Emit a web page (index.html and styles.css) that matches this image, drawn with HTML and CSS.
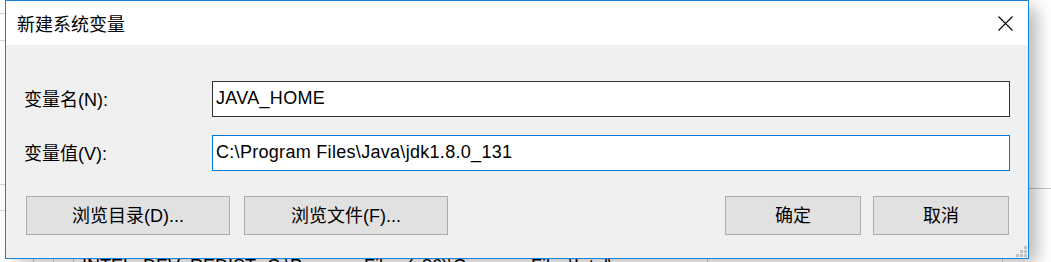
FILE: index.html
```html
<!DOCTYPE html>
<html lang="zh-CN">
<head>
<meta charset="utf-8">
<title>新建系统变量</title>
<link rel="stylesheet" href="styles.css">
</head>
<body>
<div class="desktop">
  <div class="behind">
    <div class="bline bl1"></div>
    <div class="bline bl2"></div>
    <div class="bline bl3"></div>
    <div class="bline bl4"></div>
    <div class="bline br1"></div>
    <div class="vline v1"></div>
    <div class="vline v2"></div>
    <div class="vline v3"></div>
    <div class="vline v4"></div>
    <div class="vline v5"></div>
    <div class="behind-row">
      <span class="cell-name">INTEL_DEV_REDIST</span>
      <span class="cell-value">C:\Program Files (x86)\Common Files\Intel\...</span>
    </div>
  </div>

  <div class="dialog">
    <div class="titlebar">
      <span class="title">新建系统变量</span>
      <span class="close">
        <svg width="15" height="15" viewBox="0 0 15 15"><path d="M0.5 0.5 L14.5 14.5 M14.5 0.5 L0.5 14.5" stroke="#000" stroke-width="1.1" fill="none"/></svg>
      </span>
    </div>
    <div class="content">
      <div class="fields">
        <span class="label">变量名(N):</span>
        <div class="textbox">JAVA_HOME</div>
        <span class="label">变量值(V):</span>
        <div class="textbox focused">C:\Program Files\Java\jdk1.8.0_131</div>
      </div>
      <div class="buttons">
        <div class="group group-left">
          <div class="btn wide">浏览目录(D)...</div>
          <div class="btn wide">浏览文件(F)...</div>
        </div>
        <div class="group group-right">
          <div class="btn short">确定</div>
          <div class="btn short">取消</div>
        </div>
      </div>
      <svg class="grip" width="11" height="11" viewBox="0 0 11 11">
        <rect x="8" y="0" width="3" height="3" fill="#c2c2c2"/>
        <rect x="4" y="4" width="3" height="3" fill="#c2c2c2"/>
        <rect x="8" y="4" width="3" height="3" fill="#c2c2c2"/>
        <rect x="0" y="8" width="3" height="3" fill="#c2c2c2"/>
        <rect x="4" y="8" width="3" height="3" fill="#c2c2c2"/>
        <rect x="8" y="8" width="3" height="3" fill="#c2c2c2"/>
      </svg>
    </div>
  </div>
</div>
</body>
</html>
```

FILE: styles.css
```css
html, body {
  margin: 0;
  padding: 0;
  background: #ffffff;
}

body {
  width: 1051px;
  height: 262px;
  overflow: hidden;
  font-family: "Liberation Sans", "Noto Sans CJK SC", sans-serif;
  font-size: 18px;
  color: #000;
}

.desktop {
  position: relative;
  width: 1051px;
  height: 262px;
  overflow: hidden;
  background: #ffffff;
}

/* window behind the dialog */
.behind {
  position: absolute;
  inset: 0;
}

.bline {
  position: absolute;
  height: 1px;
  background: #d4d4d4;
}
.bl1 { left: 0; top: 13px; width: 10px; }
.bl2 { left: 0; top: 40px; width: 10px; }
.bl3 { left: 0; top: 184px; width: 10px; }
.bl4 { left: 0; top: 210px; width: 10px; }
.br1 { left: 1020px; top: 188px; width: 40px; background: #c4c4c4; }

.vline {
  position: absolute;
  top: 250px;
  width: 1px;
  height: 20px;
  background: #c8c8c8;
}
.v1 { left: 33px; }
.v2 { left: 53px; }
.v3 { left: 73px; }
.v4 { left: 707px; }
.v5 { left: 1002px; }

.behind-row {
  position: absolute;
  top: 256px;
  left: 0;
  right: 0;
  height: 20px;
  line-height: 20px;
  white-space: nowrap;
  display: flex;
}
.cell-name { padding-left: 82px; width: 185px; }

/* dialog */
.dialog {
  position: absolute;
  left: 5px;
  top: 0;
  width: 1024px;
  height: 259px;
  box-sizing: border-box;
  border: 1px solid #1883d7;
  background: #f0f0f0;
  display: flex;
  flex-direction: column;
  box-shadow: 10px 6px 16px -2px rgba(0, 0, 0, 0.28);
}

.titlebar {
  height: 44px;
  flex: none;
  background: #ffffff;
  display: flex;
  align-items: center;
  justify-content: space-between;
  padding-left: 11px;
}

.title {
  font-family: "Noto Sans CJK SC", sans-serif;
  font-size: 18px;
  line-height: 24px;
  color: #000;
}

.close {
  width: 46px;
  height: 44px;
  display: flex;
  align-items: center;
  justify-content: center;
}
.close svg { display: block; }

.content {
  position: relative;
  flex: 1;
  padding: 36px 18px 0 18px;
}

.fields {
  display: grid;
  grid-template-columns: 188px 798px;
  grid-auto-rows: 36px;
  row-gap: 18px;
}

.label {
  display: flex;
  align-items: center;
  line-height: 20px;
  padding-top: 1px;
  white-space: nowrap;
}

.textbox {
  box-sizing: border-box;
  background: #ffffff;
  border: 1px solid #333333;
  padding: 0 0 3px 3px;
  display: flex;
  align-items: center;
  line-height: 20px;
  letter-spacing: 0.3px;
  white-space: nowrap;
}
.textbox.focused { border-color: #0078d7; }

.buttons {
  margin-top: 25px;
  padding-left: 2px;
  padding-right: 1px;
  display: flex;
  justify-content: space-between;
}

.group {
  display: flex;
}
.group-left { gap: 14px; }
.group-right { gap: 12px; }

.btn {
  box-sizing: border-box;
  height: 39px;
  background: #e1e1e1;
  border: 1px solid #adadad;
  display: flex;
  align-items: center;
  justify-content: center;
  line-height: 20px;
  white-space: nowrap;
  padding-top: 1px;
}
.btn.wide { width: 204px; }
.btn.short { width: 136px; }

.grip {
  position: absolute;
  right: 1px;
  bottom: 1px;
  display: block;
}
```
